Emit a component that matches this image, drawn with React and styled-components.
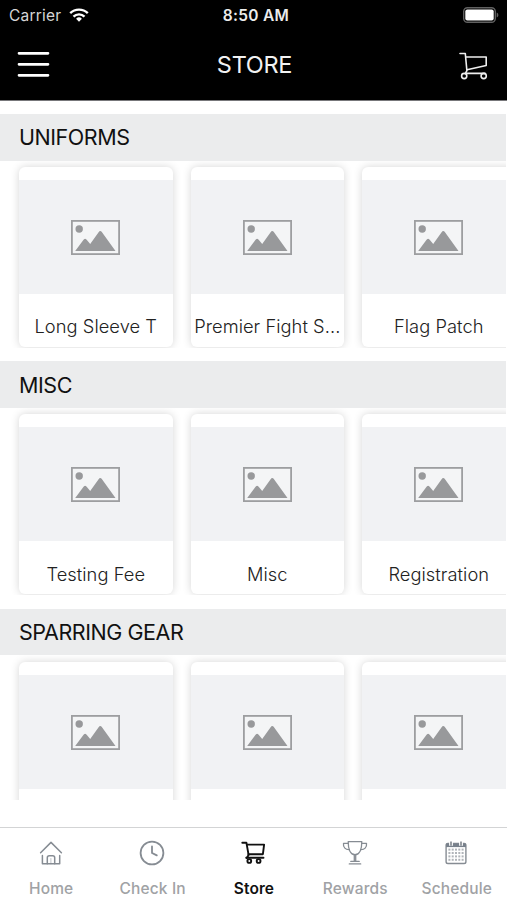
import React from "react";
import styled, { createGlobalStyle } from "styled-components";

const GlobalStyle = createGlobalStyle`
  * {
    box-sizing: border-box;
  }
  body {
    margin: 0;
    background-color: #fff;
    font-family: Inter, "Liberation Sans", sans-serif;
    overflow: hidden;
  }
`;

const Screen = styled.div`
  display: flex;
  flex-direction: column;
  width: 507px;
  height: 900px;
  overflow: hidden;
  background-color: #fff;
`;

const TopBar = styled.header`
  flex: none;
  height: 101px;
  background-color: #000;
  border-bottom: 1px solid #77777a;
  color: #fff;
`;

const StatusBar = styled.div`
  display: grid;
  grid-template-columns: 1fr auto 1fr;
  align-items: center;
  height: 30px;
  padding: 0 8px 0 9px;
  font-size: 15.5px;
`;

const Carrier = styled.div`
  display: flex;
  align-items: center;
  gap: 8px;
  color: #d6d6d6;
  letter-spacing: 0.2px;
`;

const Time = styled.div`
  padding-left: 4px;
  font-weight: 600;
  font-size: 15.5px;
  letter-spacing: 0.3px;
  color: #ececec;
`;

const BatteryIcon = styled.svg`
  justify-self: end;
`;

const NavBar = styled.div`
  display: grid;
  grid-template-columns: 1fr auto 1fr;
  align-items: center;
  height: 70px;
  padding: 0 18px 0 17px;
`;

const IconButton = styled.button`
  display: flex;
  justify-self: ${(props) => props.$side};
  padding: ${(props) => (props.$side === "end" ? "2px 0 0" : "0")};
  border: 0;
  background: none;
  color: #fff;
`;

const Title = styled.h1`
  margin: 0;
  padding: 0 0 2px 3px;
  font-size: 23.5px;
  font-weight: 400;
  letter-spacing: -0.3px;
  color: #f2f2f2;
`;

const Content = styled.main`
  flex: none;
  height: 699px;
  padding-top: 13px;
  overflow: hidden;
`;

const Section = styled.section`
  height: 247.4px;
`;

const SectionTitle = styled.h2`
  display: flex;
  align-items: center;
  width: 505.5px;
  height: 46.6px;
  margin: 0;
  padding: 0 0 0 19px;
  background-color: #ebeced;
  font-size: 21.5px;
  font-weight: 400;
  letter-spacing: -0.45px;
  color: #111;
`;

const ProductRow = styled.div`
  display: flex;
  gap: 18px;
  width: 505.5px;
  height: 187px;
  padding: 6.4px 0 0 19px;
  overflow: hidden;
`;

const Card = styled.article`
  flex: none;
  width: 153.5px;
  height: 180px;
  padding-top: 13px;
  border-radius: 6px;
  background-color: #fff;
  box-shadow: 0 0 8px rgba(0, 0, 0, 0.17);
`;

const Thumb = styled.div`
  display: flex;
  align-items: center;
  justify-content: center;
  height: 114px;
  padding-top: 0.5px;
  background-color: #f1f2f4;
`;

const ProductName = styled.p`
  display: flex;
  justify-content: center;
  margin: 0;
  padding-top: 19.4px;
  font-size: 18.3px;
  font-weight: 300;
  line-height: 26px;
  letter-spacing: 0.05px;
  white-space: nowrap;
  color: #222;
`;

const TabBar = styled.nav`
  display: grid;
  grid-template-columns: repeat(5, 101.4px);
  flex: none;
  height: 73px;
  margin-top: 27px;
  border-top: 1px solid #d3d4d5;
`;

const Tab = styled.a`
  display: flex;
  flex-direction: column;
  align-items: center;
  padding-top: 11px;
  color: ${(props) => (props.$active ? "#111" : "#868c93")};
`;

const TabLabel = styled.span`
  margin-top: 11.5px;
  padding-left: 1px;
  font-size: 15.5px;
  font-weight: ${(props) => (props.$active ? 600 : 500)};
  line-height: 20px;
  letter-spacing: ${(props) => (props.$active ? "0.1px" : "0.15px")};
  color: ${(props) => (props.$active ? "#111" : "#a0a2a5")};
`;

const WifiIcon = () => (
  <svg width="20" height="15" viewBox="0 0 20 15" fill="none" stroke="#fff" strokeWidth="2.4">
    <path d="M1.2 5.2a12.6 12.6 0 0 1 17.6 0" />
    <path d="M4.5 8.6a7.8 7.8 0 0 1 11 0" />
    <path d="M10 13.8l-2.9-3a4.1 4.1 0 0 1 5.8 0z" fill="#fff" stroke="none" />
  </svg>
);

const Battery = () => (
  <BatteryIcon width="36" height="16" viewBox="0 0 36 16">
    <rect x="0.7" y="0.7" width="31.6" height="14.6" rx="3.8" fill="none" stroke="#606060" strokeWidth="1.4" />
    <rect x="2.3" y="2.4" width="28.4" height="11.2" rx="2" fill="#fff" />
    <path d="M33.7 5.5c2.2.8 2.2 4.2 0 5z" fill="#606060" />
  </BatteryIcon>
);

const MenuIcon = () => (
  <svg width="33" height="28" viewBox="0 0 33 28" stroke="#fff" strokeWidth="2.7" strokeLinecap="round">
    <path d="M2 2.3h29M2 13.3h29M2 24.3h29" />
  </svg>
);

const HeaderCartIcon = () => (
  <svg width="30" height="28" viewBox="0 0 30 28" fill="none" stroke="#eee" strokeWidth="1.6" strokeLinejoin="round" strokeLinecap="round">
    <path d="M1 1.5h5.3l1.6 17.2-1.6 3" />
    <path d="M7 5h20.2v8.5L8 17.8" />
    <path d="M7.5 21.4H26" />
    <circle cx="5.2" cy="24" r="2.6" />
    <circle cx="24.7" cy="24" r="2.6" />
  </svg>
);

const PlaceholderIcon = () => (
  <svg width="49" height="35" viewBox="0 0 49 35">
    <rect x="0.9" y="0.9" width="47.2" height="33.2" fill="#f4f5f6" stroke="#9d9ea0" strokeWidth="1.8" />
    <circle cx="8.2" cy="9" r="3.7" fill="#98999b" />
    <path d="M4.2 31L12 20.5Q14 17 16.3 20.5L19.2 24 27.6 12.3Q29.2 9.5 31 12.3L44.5 31z" fill="#98999b" />
  </svg>
);

const HomeIcon = () => (
  <svg width="28" height="28" viewBox="0 0 28 28" fill="none" stroke="currentColor" strokeWidth="1.5" strokeLinecap="round" strokeLinejoin="round">
    <path d="M3.6 13.8L14 3.4l10.4 10.4" />
    <path d="M5.4 16.6v8.2h4.9v-6q0-2 2-2h3.4q2 0 2 2v6h5v-8.2" />
    <path d="M10.3 24.8h7.4" />
    <path d="M13.9 19.5v5.3" strokeWidth="1" opacity="0.5" />
  </svg>
);

const ClockIcon = () => (
  <svg width="28" height="28" viewBox="0 0 28 28" fill="none" stroke="currentColor" strokeWidth="1.8" strokeLinecap="round">
    <circle cx="14" cy="14" r="11.4" />
    <path d="M14 7.4V14l4.8 2.4" strokeLinejoin="round" />
  </svg>
);

const CartIcon = () => (
  <svg width="28" height="28" viewBox="0 0 28 28" fill="none" stroke="currentColor" strokeWidth="1.9" strokeLinejoin="round" strokeLinecap="round">
    <path d="M3.3 3.7h4.1l2.2 12.2-1.8 3.1" />
    <path d="M8 5.6h17.1l-1.2 9.6H9.4" />
    <path d="M7.2 18.8h17.3" />
    <circle cx="10.3" cy="22" r="1.9" />
    <circle cx="19.6" cy="22" r="1.9" />
  </svg>
);

const TrophyIcon = () => (
  <svg width="28" height="28" viewBox="0 0 28 28" fill="none" stroke="currentColor" strokeWidth="1.3" strokeLinejoin="round" strokeLinecap="round">
    <path d="M7.2 2.7h13.6c0 7.2-2 13-6.8 13s-6.8-5.8-6.8-13z" />
    <path d="M7.2 4.4H2.5c-.6 4.2 2.2 6.4 5.8 6.2M20.8 4.4h4.7c.6 4.2-2.2 6.4-5.8 6.2" />
    <path d="M13.3 15.8v6.3M14.7 15.8v6.3M9.8 22.4h8.4M8.3 24.9h11.4" />
  </svg>
);

const gridCols = [7.4, 10.7, 14, 17.3, 20.6];
const gridRows = [10.6, 14, 17.4, 20.8];

const CalendarIcon = () => (
  <svg width="28" height="28" viewBox="0 0 28 28" fill="none" stroke="currentColor" strokeWidth="1.4">
    <rect x="4.1" y="4.5" width="19.8" height="20" rx="1.8" />
    <path d="M4.1 4.5h19.8v3.6H4.1z" fill="#78818c" stroke="none" />
    <path d="M9 2.4v4.4M19 2.4v4.4" stroke="#fff" strokeWidth="3.8" />
    <path d="M9 2.4v4.4M19 2.4v4.4" strokeWidth="1.7" />
    {gridRows.map((y) =>
      gridCols.map((x) => (
        <rect key={`${x}-${y}`} x={x - 1} y={y - 1} width="2" height="2" fill="currentColor" stroke="none" opacity="0.65" />
      ))
    )}
  </svg>
);

const sections = [
  {
    title: "UNIFORMS",
    products: [
      { name: "Long Sleeve T" },
      { name: "Premier Fight S..." },
      { name: "Flag Patch" },
    ],
  },
  {
    title: "MISC",
    products: [{ name: "Testing Fee" }, { name: "Misc" }, { name: "Registration" }],
  },
  {
    title: "SPARRING GEAR",
    products: [{ name: "" }, { name: "" }, { name: "" }],
  },
];

const tabs = [
  { label: "Home", Icon: HomeIcon },
  { label: "Check In", Icon: ClockIcon },
  { label: "Store", Icon: CartIcon, active: true },
  { label: "Rewards", Icon: TrophyIcon },
  { label: "Schedule", Icon: CalendarIcon },
];

export default function App() {
  return (
    <Screen>
      <GlobalStyle />
      <TopBar>
        <StatusBar>
          <Carrier>
            Carrier
            <WifiIcon />
          </Carrier>
          <Time>8:50 AM</Time>
          <Battery />
        </StatusBar>
        <NavBar>
          <IconButton $side="start" aria-label="Menu">
            <MenuIcon />
          </IconButton>
          <Title>STORE</Title>
          <IconButton $side="end" aria-label="Cart">
            <HeaderCartIcon />
          </IconButton>
        </NavBar>
      </TopBar>
      <Content>
        {sections.map((section) => (
          <Section key={section.title}>
            <SectionTitle>{section.title}</SectionTitle>
            <ProductRow>
              {section.products.map((product, i) => (
                <Card key={i}>
                  <Thumb>
                    <PlaceholderIcon />
                  </Thumb>
                  <ProductName>{product.name}</ProductName>
                </Card>
              ))}
            </ProductRow>
          </Section>
        ))}
      </Content>
      <TabBar>
        {tabs.map(({ label, Icon, active }) => (
          <Tab key={label} $active={active}>
            <Icon />
            <TabLabel $active={active}>{label}</TabLabel>
          </Tab>
        ))}
      </TabBar>
    </Screen>
  );
}
